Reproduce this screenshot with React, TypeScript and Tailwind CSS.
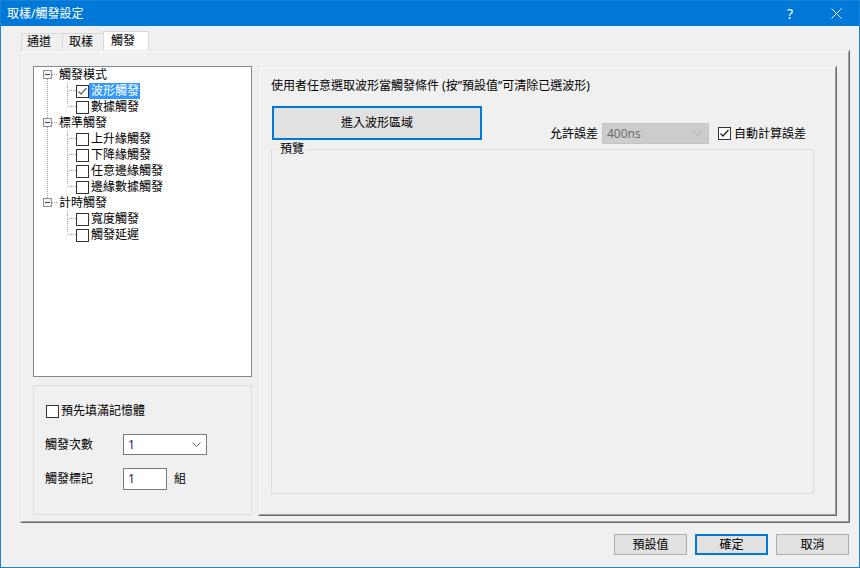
import React from "react";

type Child = { label: string; checked?: boolean; selected?: boolean };
type Group = { label: string; children: Child[] };

const tree: Group[] = [
  {
    label: "觸發模式",
    children: [{ label: "波形觸發", checked: true, selected: true }, { label: "數據觸發" }],
  },
  {
    label: "標準觸發",
    children: [
      { label: "上升緣觸發" },
      { label: "下降緣觸發" },
      { label: "任意邊緣觸發" },
      { label: "邊緣數據觸發" },
    ],
  },
  {
    label: "計時觸發",
    children: [{ label: "寬度觸發" }, { label: "觸發延遲" }],
  },
];

function Dot({ x1, y1, x2, y2 }: { x1: number; y1: number; x2: number; y2: number }) {
  return (
    <line
      x1={x1}
      y1={y1}
      x2={x2}
      y2={y2}
      stroke="#a0a0a0"
      strokeDasharray="1 1"
      shapeRendering="crispEdges"
    />
  );
}

function Chevron({ color }: { color: string }) {
  return (
    <svg width="9" height="5" viewBox="0 0 9 5">
      <polyline points="0.5,0.5 4.5,4.5 8.5,0.5" fill="none" stroke={color} strokeWidth="1" />
    </svg>
  );
}

function CheckBox({ checked, tone = "#333" }: { checked?: boolean; tone?: string }) {
  return (
    <span className="flex h-[13px] w-[13px] shrink-0 items-center justify-center border border-[#333333] bg-white">
      {checked && (
        <svg width="11" height="11" viewBox="0 0 11 11">
          <polyline points="1.5,5.5 4,8 9.5,2" fill="none" stroke={tone} strokeWidth="1.3" />
        </svg>
      )}
    </span>
  );
}

function TreeView() {
  return (
    <div className="flex h-[311px] w-[219px] flex-col border border-[#828790] bg-white">
      {tree.map((g, gi) => {
        const lastGroup = gi === tree.length - 1;
        return (
          <React.Fragment key={g.label}>
            <div className="flex h-[16px] items-center">
              <svg width="25" height="16" viewBox="0 0 25 16" className="shrink-0">
                {gi > 0 && <Dot x1={13.5} y1={0} x2={13.5} y2={3} />}
                {!lastGroup && <Dot x1={13.5} y1={12} x2={13.5} y2={16} />}
                <rect x="9.5" y="3.5" width="8" height="8" fill="#f4f4f4" stroke="#919191" />
                <line x1="11" y1="7.5" x2="16" y2="7.5" stroke="#2c4a8c" />
                <Dot x1={18} y1={7.5} x2={24} y2={7.5} />
              </svg>
              <span className="whitespace-nowrap">{g.label}</span>
            </div>
            {g.children.map((c, ci) => {
              const lastChild = ci === g.children.length - 1;
              return (
                <div key={c.label} className="flex h-[16px] items-center">
                  <svg width="42" height="16" viewBox="0 0 42 16" className="shrink-0">
                    {!lastGroup && <Dot x1={13.5} y1={0} x2={13.5} y2={16} />}
                    <Dot x1={33.5} y1={0} x2={33.5} y2={lastChild ? 8 : 16} />
                    <Dot x1={35} y1={7.5} x2={42} y2={7.5} />
                  </svg>
                  <CheckBox checked={c.checked} tone="#6b6b6b" />
                  <span
                    className={
                      c.selected
                        ? "h-[16px] whitespace-nowrap bg-[#3399ff] pl-[2px] pr-[1px] text-white"
                        : "whitespace-nowrap pl-[2px]"
                    }
                  >
                    {c.label}
                  </span>
                </div>
              );
            })}
          </React.Fragment>
        );
      })}
    </div>
  );
}

function Raised({ className, children }: { className: string; children?: React.ReactNode }) {
  return (
    <div
      className={
        "flex border border-t-[#e3e3e3] border-l-[#e3e3e3] border-r-[#696969] border-b-[#696969] " +
        className
      }
    >
      <div className="flex flex-1 flex-col border border-t-white border-l-white border-r-[#a0a0a0] border-b-[#a0a0a0]">
        {children}
      </div>
    </div>
  );
}

export default function App() {
  return (
    <div className="flex h-[568px] w-[860px] flex-col border border-[#1883d7] bg-[#f0f0f0] font-['Noto_Sans','Noto_Sans_CJK_TC',sans-serif] text-[12px] leading-[16px] text-black">
      {/* title bar */}
      <div className="flex h-[25px] shrink-0 items-center bg-[#0078d7] text-white">
        <span className="pl-[6px]">取樣/觸發設定</span>
        <div className="ml-auto flex h-full">
          <span className="flex w-[46px] items-center justify-center text-[14px]">?</span>
          <span className="flex w-[46px] items-center justify-center">
            <svg width="11" height="11" viewBox="0 0 11 11">
              <path d="M0.5 0.5 L10.5 10.5 M10.5 0.5 L0.5 10.5" stroke="white" strokeWidth="1" />
            </svg>
          </span>
        </div>
      </div>

      <div className="flex flex-col pl-[19px] pt-[5px]">
        {/* tabs */}
        <div className="flex h-[19px] items-end pl-[1px]">
          <div className="flex h-[17px] w-[41px] items-center border-l border-t border-[#d9d9d9] pl-[5px]">通道</div>
          <div className="flex h-[17px] w-[41px] items-center border-l border-t border-[#d9d9d9] pl-[6px]">取樣</div>
          <div className="flex h-[19px] w-[46px] items-center border-l border-r border-t border-[#d9d9d9] bg-white pl-[7px]">觸發</div>
        </div>

        {/* tab page */}
        <Raised className="h-[473px] w-[830px]">
          <div className="flex gap-[6px] pl-[11px] pt-[14px]">
            {/* left column */}
            <div className="flex w-[219px] flex-col">
              <TreeView />
              <div className="mt-[8px] flex h-[130px] flex-col border border-[#dcdcdc] pl-[11px] pt-[17px]">
                <div className="flex h-[16px] items-center">
                  <span className="ml-[1px]">
                    <CheckBox />
                  </span>
                  <span className="pl-[2px]">預先填滿記憶體</span>
                </div>
                <div className="mt-[15px] flex h-[21px] items-center">
                  <span className="w-[78px]">觸發次數</span>
                  <div className="flex h-[21px] w-[84px] items-center justify-between border border-[#7a7a7a] bg-white pl-[4px] pr-[5px]">
                    <span className="text-[#1c1c6c]">1</span>
                    <Chevron color="#606060" />
                  </div>
                </div>
                <div className="mt-[13px] flex h-[22px] items-center">
                  <span className="w-[78px]">觸發標記</span>
                  <div className="flex h-[22px] w-[44px] items-center border border-[#7a7a7a] bg-white pl-[4px] text-[#1c1c6c]">1</div>
                  <span className="ml-[7px]">組</span>
                </div>
              </div>
            </div>

            {/* right panel */}
            <Raised className="h-[450px] w-[579px]">
              <p className="pl-[11px] pt-[10px] whitespace-nowrap">
                使用者任意選取波形當觸發條件 (按”預設值”可清除已選波形)
              </p>
              <div className="mt-[12px] flex items-start pl-[12px]">
                <div className="flex h-[34px] w-[210px] items-center justify-center border-2 border-[#0078d7] bg-[#e1e1e1]">
                  進入波形區域
                </div>
                <div className="ml-[68px] mt-[17px] flex h-[21px] items-center">
                  <span className="w-[48px] whitespace-nowrap">允許誤差</span>
                  <div className="ml-[4px] flex h-[21px] w-[107px] items-center justify-between border border-[#c4c4c4] bg-[#cccccc] pl-[4px] pr-[6px] text-[#6d6d6d]">
                    <span>400ns</span>
                    <Chevron color="#a8a8a8" />
                  </div>
                  <span className="ml-[9px]">
                    <CheckBox checked tone="#222" />
                  </span>
                  <span className="ml-[3px] whitespace-nowrap">自動計算誤差</span>
                </div>
              </div>
              <div className="ml-[11px] mt-[5px] flex h-[345px] w-[543px] flex-col border border-[#dcdcdc]">
                <span className="-mt-[9px] ml-[4px] self-start bg-[#f0f0f0] pl-[4px] pr-[1px]">預覽</span>
              </div>
            </Raised>
          </div>
        </Raised>
      </div>

      {/* dialog buttons */}
      <div className="mt-[11px] flex justify-end gap-[8px] pr-[10px]">
        <div className="flex h-[21px] w-[73px] items-center justify-center border border-[#adadad] bg-[#e1e1e1]">預設值</div>
        <div className="flex h-[21px] w-[73px] items-center justify-center border-2 border-[#0078d7] bg-[#e1e1e1]">確定</div>
        <div className="flex h-[21px] w-[73px] items-center justify-center border border-[#adadad] bg-[#e1e1e1]">取消</div>
      </div>
    </div>
  );
}
